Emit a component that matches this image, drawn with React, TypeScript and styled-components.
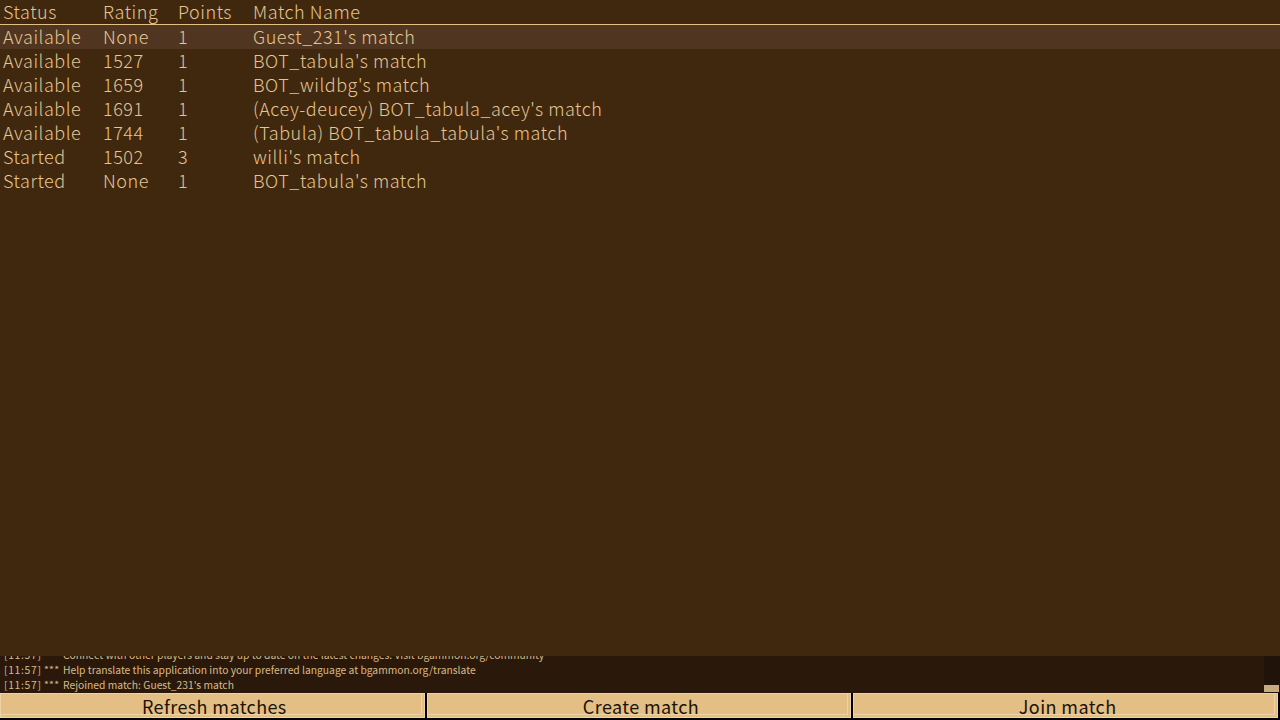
import { createGlobalStyle } from 'styled-components'
import styled from 'styled-components'

const matches = [
  { status: 'Available', rating: 'None', points: '1', name: "Guest_231's match" },
  { status: 'Available', rating: '1527', points: '1', name: "BOT_tabula's match" },
  { status: 'Available', rating: '1659', points: '1', name: "BOT_wildbg's match" },
  { status: 'Available', rating: '1691', points: '1', name: "(Acey-deucey) BOT_tabula_acey's match" },
  { status: 'Available', rating: '1744', points: '1', name: "(Tabula) BOT_tabula_tabula's match" },
  { status: 'Started', rating: '1502', points: '3', name: "willi's match" },
  { status: 'Started', rating: 'None', points: '1', name: "BOT_tabula's match" },
]

const logLines = [
  'Connect with other players and stay up to date on the latest changes. Visit bgammon.org/community',
  'Help translate this application into your preferred language at bgammon.org/translate',
  "Rejoined match: Guest_231's match",
]

export default function App() {
  return (
    <>
      <GlobalStyle />
      <Screen>
        <MatchList>
          <HeaderRow>
            <StatusCell>Status</StatusCell>
            <RatingCell>Rating</RatingCell>
            <PointsCell>Points</PointsCell>
            <span>Match Name</span>
          </HeaderRow>
          {matches.map((match, i) => (
            <MatchRow key={i} $selected={i === 0}>
              <StatusCell>{match.status}</StatusCell>
              <RatingCell>{match.rating}</RatingCell>
              <PointsCell>{match.points}</PointsCell>
              <span>{match.name}</span>
            </MatchRow>
          ))}
        </MatchList>
        <LogPanel>
          <LogLines>
            {logLines.map((line) => (
              <LogLine key={line}>
                <LogStamp>[11:57]</LogStamp>
                <LogMark>***</LogMark>
                {line}
              </LogLine>
            ))}
          </LogLines>
          <ScrollTrack>
            <ScrollThumb />
          </ScrollTrack>
        </LogPanel>
        <ButtonBar>
          <ActionButton>Refresh matches</ActionButton>
          <ActionButton>Create match</ActionButton>
          <ActionButton>Join match</ActionButton>
        </ButtonBar>
      </Screen>
    </>
  )
}

const GlobalStyle = createGlobalStyle`
  html, body {
    margin: 0;
    padding: 0;
    background: #000;
  }
`

const Screen = styled.div`
  display: flex;
  flex-direction: column;
  width: 1280px;
  height: 720px;
  overflow: hidden;
  background: #000;
  font-family: "Noto Sans CJK JP", "Noto Sans", sans-serif;
`

const MatchList = styled.div`
  height: 656px;
  flex: none;
  background: #40280f;
  color: #e5c592;
  font-size: 18px;
  font-weight: 300;
  letter-spacing: 0.55px;
`

const HeaderRow = styled.div`
  display: flex;
  align-items: flex-start;
  height: 24px;
  padding-left: 3px;
  border-bottom: 1px solid #e3bf86;
  box-sizing: content-box;
  line-height: 22px;
`

const MatchRow = styled.div<{ $selected?: boolean }>`
  display: flex;
  align-items: flex-start;
  height: 24px;
  padding-left: 3px;
  line-height: 22px;
  background: ${(p) => (p.$selected ? '#503620' : 'transparent')};
`

const StatusCell = styled.span`
  width: 100px;
  flex: none;
`

const RatingCell = styled.span`
  width: 75px;
  flex: none;
`

const PointsCell = styled.span`
  width: 75px;
  flex: none;
`

const LogPanel = styled.div`
  display: flex;
  height: 37px;
  flex: none;
  background: #2a190b;
  color: #d9b987;
`

const LogLines = styled.div`
  flex: 1;
  display: flex;
  flex-direction: column;
  justify-content: flex-end;
  overflow: hidden;
  padding: 0 0 1px 4px;
`

const LogLine = styled.div`
  display: flex;
  height: 15px;
  line-height: 15px;
  font-size: 10.3px;
  white-space: nowrap;
`

const LogStamp = styled.span`
  width: 40px;
  flex: none;
  letter-spacing: 0.7px;
`

const LogMark = styled.span`
  width: 19px;
  flex: none;
  letter-spacing: 0.3px;
`

const ScrollTrack = styled.div`
  display: flex;
  flex-direction: column;
  justify-content: flex-end;
  width: 16px;
  background: #20130a;
`

const ScrollThumb = styled.div`
  height: 7px;
  margin-right: 1px;
  margin-bottom: 1px;
  background: #c8ab7e;
`

const ButtonBar = styled.div`
  display: grid;
  grid-template-columns: repeat(3, 1fr);
  gap: 2px;
  height: 25px;
  padding-right: 2px;
  padding-bottom: 2px;
  box-sizing: content-box;
  flex: none;
`

const ActionButton = styled.button`
  padding: 0 0 0 4px;
  border: 1px solid #eed3a5;
  background: #e3bf86;
  box-shadow: inset -2px -2px 0 #e3bf86, inset -3px -3px 0 #eed3a5;
  color: #1d1206;
  font-family: inherit;
  font-size: 18px;
  font-weight: 400;
  letter-spacing: 0.4px;
  line-height: 22px;
  height: 25px;
`
